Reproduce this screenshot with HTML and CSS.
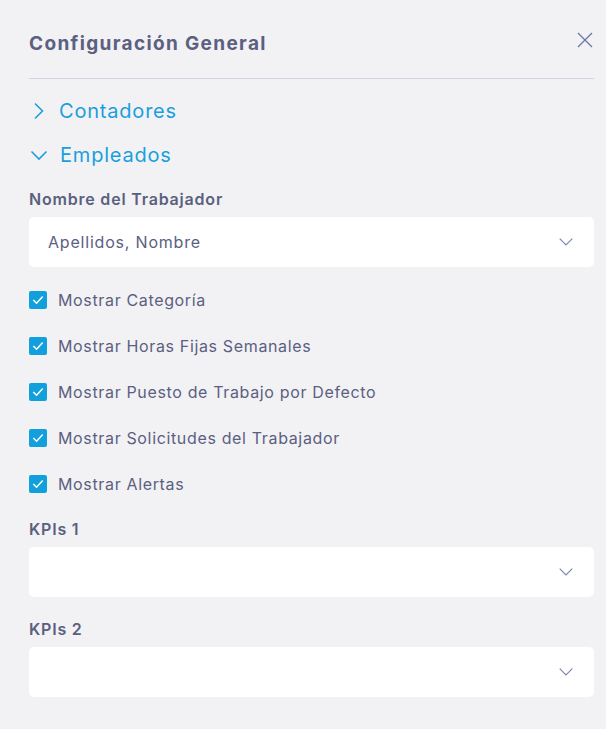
FILE: index.html
```html
<!DOCTYPE html>
<html lang="es">
<head>
<meta charset="utf-8">
<link rel="stylesheet" href="styles.css">
</head>
<body>
<div class="panel">
  <header class="head">
    <h1 class="title">Configuración General</h1>
    <button class="close" aria-label="Cerrar">
      <svg width="16" height="16" viewBox="0 0 16 16"><path d="M1 1L15 15M15 1L1 15" stroke="#6b7aa8" stroke-width="1.4" fill="none"/></svg>
    </button>
  </header>
  <div class="divider"></div>

  <div class="sections">
    <div class="section">
      <svg class="chev chev-right" width="12" height="18" viewBox="0 0 12 18"><path d="M2 1.5L9.5 9L2 16.5" stroke="#1a9fdc" stroke-width="1.6" fill="none"/></svg>
      <span>Contadores</span>
    </div>
    <div class="section">
      <svg class="chev chev-down" width="18" height="12" viewBox="0 0 18 12"><path d="M1.5 2.5L9 10L16.5 2.5" stroke="#1a9fdc" stroke-width="1.6" fill="none"/></svg>
      <span>Empleados</span>
    </div>
  </div>

  <div class="field field-first">
    <label class="label">Nombre del Trabajador</label>
    <div class="select">
      <span>Apellidos, Nombre</span>
      <svg width="14" height="8" viewBox="0 0 14 8"><path d="M0.7 0.7L7 7L13.3 0.7" stroke="#7c87ad" stroke-width="1.2" fill="none"/></svg>
    </div>
  </div>

  <ul class="checks">
    <li><span class="box"><svg width="12" height="10" viewBox="0 0 12 10"><path d="M1.3 5L4.6 8.2L10.7 1.6" stroke="#fff" stroke-width="1.5" fill="none"/></svg></span>Mostrar Categoría</li>
    <li><span class="box"><svg width="12" height="10" viewBox="0 0 12 10"><path d="M1.3 5L4.6 8.2L10.7 1.6" stroke="#fff" stroke-width="1.5" fill="none"/></svg></span>Mostrar Horas Fijas Semanales</li>
    <li><span class="box"><svg width="12" height="10" viewBox="0 0 12 10"><path d="M1.3 5L4.6 8.2L10.7 1.6" stroke="#fff" stroke-width="1.5" fill="none"/></svg></span>Mostrar Puesto de Trabajo por Defecto</li>
    <li><span class="box"><svg width="12" height="10" viewBox="0 0 12 10"><path d="M1.3 5L4.6 8.2L10.7 1.6" stroke="#fff" stroke-width="1.5" fill="none"/></svg></span>Mostrar Solicitudes del Trabajador</li>
    <li><span class="box"><svg width="12" height="10" viewBox="0 0 12 10"><path d="M1.3 5L4.6 8.2L10.7 1.6" stroke="#fff" stroke-width="1.5" fill="none"/></svg></span>Mostrar Alertas</li>
  </ul>

  <div class="field field-kpi1">
    <label class="label">KPIs 1</label>
    <div class="select">
      <span></span>
      <svg width="14" height="8" viewBox="0 0 14 8"><path d="M0.7 0.7L7 7L13.3 0.7" stroke="#7c87ad" stroke-width="1.2" fill="none"/></svg>
    </div>
  </div>
  <div class="field field-kpi2">
    <label class="label">KPIs 2</label>
    <div class="select">
      <span></span>
      <svg width="14" height="8" viewBox="0 0 14 8"><path d="M0.7 0.7L7 7L13.3 0.7" stroke="#7c87ad" stroke-width="1.2" fill="none"/></svg>
    </div>
  </div>
</div>
</body>
</html>
```
FILE: styles.css
```css
* { box-sizing: border-box; }
html, body { margin: 0; padding: 0; }
body {
  background: #f2f2f5;
  font-family: Inter, "Open Sans", sans-serif;
  color: #5b6080;
  width: 606px;
  height: 729px;
  overflow: hidden;
}
.panel {
  padding: 24px 12px 0 29px;
}
.head {
  display: flex;
  align-items: center;
  justify-content: space-between;
  height: 38px;
}
.title {
  margin: 0;
  font-size: 19px;
  font-weight: 700;
  color: #5b6080;
  letter-spacing: 1.35px;
}
.close {
  border: 0;
  background: none;
  padding: 0;
  margin-right: 1px;
  width: 16px;
  height: 16px;
  display: flex;
  margin-top: -6px;
}
.divider {
  height: 1px;
  background: #d3d3e2;
  margin-top: 16px;
}
.sections { margin-top: 9px; }
.section {
  display: flex;
  align-items: center;
  height: 45px;
  color: #1a9fdc;
  font-size: 20px;
  letter-spacing: 0.8px;
}
.section:last-child { margin-top: -1px; }
.chev { flex: none; }
.chev-right { margin-left: 4px; margin-right: 14px; }
.chev-down { margin-left: 1px; margin-right: 12px; }
.field { display: flex; flex-direction: column; }
.label {
  font-size: 16px;
  font-weight: 600;
  letter-spacing: 0.8px;
  height: 20px;
  line-height: 20px;
  margin-bottom: 8px;
}
.field-first .label { margin-top: 12px; }
.field-kpi1 .label { margin-top: 12px; }
.field-kpi2 .label { margin-top: 22px; }
.select {
  height: 50px;
  background: #fff;
  border-radius: 5px;
  display: flex;
  align-items: center;
  justify-content: space-between;
  padding: 0 21px 0 19px;
  font-size: 16px;
  letter-spacing: 0.8px;
  color: #5b6080;
}
.checks {
  list-style: none;
  margin: 10px 0 0;
  padding: 0;
}
.checks li {
  display: flex;
  align-items: center;
  height: 46px;
  font-size: 16px;
  letter-spacing: 0.65px;
}
.box {
  width: 18px;
  height: 18px;
  border-radius: 2px;
  background: #12a0dd;
  display: flex;
  align-items: center;
  justify-content: center;
  margin-right: 11px;
  flex: none;
}
```
